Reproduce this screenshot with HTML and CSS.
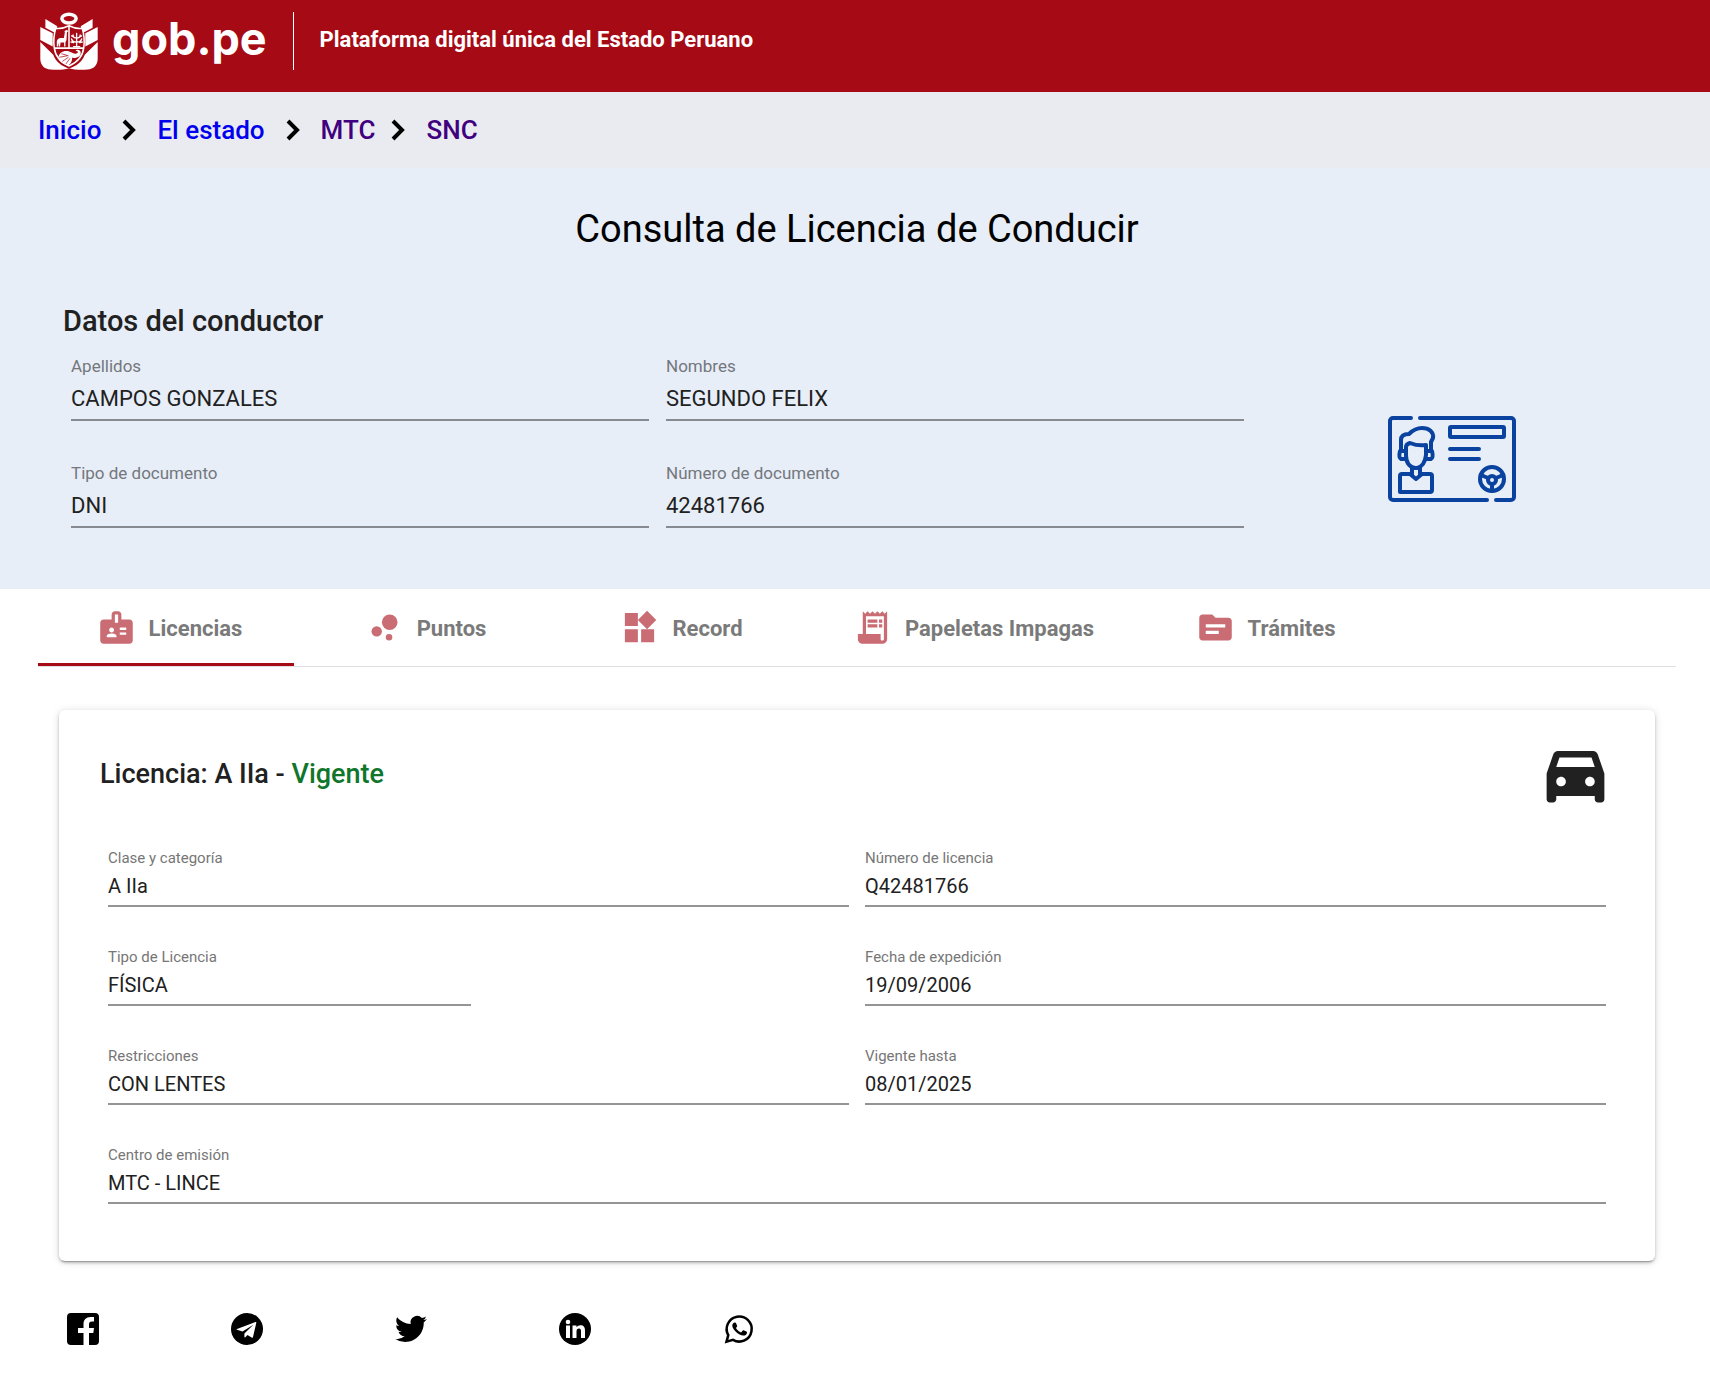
FILE: index.html
```html
<!DOCTYPE html>
<html lang="es">
<head>
<meta charset="utf-8">
<meta name="viewport" content="width=device-width, initial-scale=1">
<title>Consulta de Licencia de Conducir</title>
<link rel="stylesheet" href="styles.css">
</head>
<body>
<header class="topbar">
  <a class="brand" href="#" aria-label="gob.pe">
    <svg class="brand-shield" viewBox="0 0 57 57" aria-hidden="true">
      <ellipse cx="28.500" cy="6.500" rx="7" ry="4.300" fill="none" stroke="#fff" stroke-width="3.400"/>
      <path fill="#fff" d="M5.300 7 17 14l-2.500 6.500L5.300 15.500zM51.700 7 40 14l2.500 6.500 9.200-5z"/>
      <path fill="#fff" d="M.3 14.700 12.500 21v13L.3 27.500zM56.700 14.700 44.500 21v13L56.700 27.500z"/>
      <path fill="#fff" d="M.3 29.500 13 42c2.500 7 8 11 15.500 13.500C36 53 41.500 49 44 42l12.700-12.500V46c0 6-4 10.500-10 10.500-7 .5-13 .3-18.200-1.300-5.200 1.600-11.200 1.800-18.200 1.300-6 0-10-4.500-10-10.500z"/>
      <path fill="#a50a15" stroke="#fff" stroke-width="1.500" d="M15.500 16c5 .5 9-.5 13-2.500 4 2 8 3 13 2.500 1.500 5 2.500 12 1.500 19-1 9-6.500 14.500-14.500 18C20.500 49.500 15 44 14 35c-1-7 0-14 1.500-19z"/>
      <path fill="none" stroke="#fff" stroke-width="1.500" d="M14 35.500h29M28.500 13.500v22"/>
      <path fill="#fff" d="M16.500 34v-5c0-2 2-3.500 4-3.500h3l1-6-.8-.7 2.800-1.300 1.200 1.300-1.200 1-.5 8-1 2v4.200h-1.300V30h-3.500l-.5 4h-1.200v-4l-.8 4z"/>
      <path fill="none" stroke="#fff" stroke-width="1.300" stroke-linecap="round" d="M36 34V21M36 29.500c-3 0-4.500-1-5-3M36 29.500c3 0 4.500-1 5-3M36 25.500c-2.500 0-3.500-1.500-3.500-3M36 25.500c2.500 0 3.500-1.500 3.500-3M33 34h6M30.500 29.500l2.500.5M41.500 29.500 39 30M31 23.500l2 1M41 23.500l-2 1"/>
      <path fill="#fff" d="M18 45c.5-5 5-7.500 10-6.500 3.500.7 6 3.500 8.500 2 1.500-1 .5-2.500-1.500-2 1-2.500 5.500-1.500 5 2-.5 4-5 5-8.500 4.500.5 3.500-2 7-4.500 7.500-4-1-8.500-4-9-7.500z"/>
      <path fill="none" stroke="#a50a15" stroke-width=".7" d="M19 44.500l8-1.500M22 48.500l6-4M25.500 51l4-5.500M21 41l7 2"/>
    </svg>
    <span class="brand-name">gob.pe</span>
  </a>
  <p class="tagline">Plataforma digital única del Estado Peruano</p>
</header>

<nav class="crumbs" aria-label="Ruta">
  <a href="#">Inicio</a>
  <svg class="chevron" viewBox="0 0 14 22" aria-hidden="true"><path d="M2 2l9 9-9 9"/></svg>
  <a href="#">El estado</a>
  <svg class="chevron" viewBox="0 0 14 22" aria-hidden="true"><path d="M2 2l9 9-9 9"/></svg>
  <a class="seen" href="#">MTC</a>
  <svg class="chevron chevron-near" viewBox="0 0 14 22" aria-hidden="true"><path d="M2 2l9 9-9 9"/></svg>
  <a class="seen" href="#">SNC</a>
</nav>

<main>
  <section class="driver">
    <h1>Consulta de Licencia de Conducir</h1>
    <h2>Datos del conductor</h2>
    <div class="driver-row">
      <div class="driver-fields">
        <div class="field field-lg"><label for="apellidos">Apellidos</label><input id="apellidos" value="CAMPOS GONZALES" readonly></div>
        <div class="field field-lg"><label for="nombres">Nombres</label><input id="nombres" value="SEGUNDO FELIX" readonly></div>
        <div class="field field-lg"><label for="tipodoc">Tipo de documento</label><input id="tipodoc" value="DNI" readonly></div>
        <div class="field field-lg"><label for="numdoc">Número de documento</label><input id="numdoc" value="42481766" readonly></div>
      </div>
      <div class="driver-picture">
        <svg class="id-card" viewBox="0 0 128 86" aria-hidden="true">
          <g fill="none" stroke="#0a429f" stroke-width="4" stroke-linecap="round" stroke-linejoin="round">
            <path d="M23 2H5a3 3 0 0 0-3 3v76a3 3 0 0 0 3 3h94M32 2h91a3 3 0 0 1 3 3v76a3 3 0 0 1-3 3h-15"/>
            <rect x="62" y="11" width="54" height="10" rx="1"/>
            <path d="M62 33h29M62 43h29"/>
            <circle cx="104" cy="63" r="12"/>
            <circle cx="104" cy="64" r="4"/>
            <path d="M93 59l7 3M115 59l-7 3M104 69v6"/>
            <path d="M12 76V60a2 2 0 0 1 2-2h8l6 5 6-5h8a2 2 0 0 1 2 2v14a2 2 0 0 1-2 2z"/>
            <path d="M24 52v7M32 52v7"/>
            <path d="M18 31v8c0 8 4 12 9 13h2c5-1 8-5 9-13V29c-6 1-11 0-16-2-3 1-4 2-4 4z"/>
            <path d="M13 35V24c0-4 3-6 8-6 4-4 8-6 13-6 7 0 12 4 11 10l-2 4v9"/>
            <path d="M18 35h-6c-1 4-1 7 1 8h5M38 35h6c1 4 1 7-1 8h-5"/>
          </g>
        </svg>
      </div>
    </div>
  </section>

  <div class="tabs" role="tablist">
    <button class="tab tab-active" role="tab" aria-selected="true" type="button">
      <svg viewBox="0 0 24 24" aria-hidden="true"><path d="M20 7h-5V4c0-1.100-.9-2-2-2h-2c-1.100 0-2 .9-2 2v3H4c-1.100 0-2 .9-2 2v11c0 1.100.9 2 2 2h16c1.100 0 2-.9 2-2V9c0-1.100-.9-2-2-2zM9 12c.83 0 1.500.67 1.500 1.500S9.830 15 9 15s-1.500-.67-1.500-1.500S8.170 12 9 12zm3 6H6v-.75c0-1 2-1.500 3-1.500s3 .5 3 1.500V18zm1-9h-2V4h2v5zm5 7.500h-4V15h4v1.500zm0-3h-4V12h4v1.500z"/></svg>Licencias</button>
    <button class="tab" role="tab" aria-selected="false" type="button">
      <svg viewBox="0 0 24 24" aria-hidden="true"><circle cx="7.200" cy="14.400" r="3.200"/><circle cx="14.800" cy="18" r="2"/><circle cx="15.200" cy="8.800" r="4.800"/></svg>Puntos</button>
    <button class="tab" role="tab" aria-selected="false" type="button">
      <svg viewBox="0 0 24 24" aria-hidden="true"><path d="M13 13v8h8v-8h-8zM3 21h8v-8H3v8zM3 3v8h8V3H3zm13.660-1.310L11 7.340 16.660 13l5.660-5.660-5.660-5.650z"/></svg>Record</button>
    <button class="tab" role="tab" aria-selected="false" type="button">
      <svg viewBox="0 0 24 24" aria-hidden="true"><path d="M19.500 3.500 18 2l-1.500 1.500L15 2l-1.500 1.500L12 2l-1.500 1.500L9 2 7.500 3.500 6 2v14H3v3c0 1.660 1.340 3 3 3h12c1.660 0 3-1.340 3-3V2l-1.500 1.500zM19 19c0 .55-.45 1-1 1s-1-.45-1-1v-3H8V5h11v14z"/><path d="M9 7h6v2H9zM16 7h2v2h-2zM9 10h6v2H9zM16 10h2v2h-2z"/></svg>Papeletas Impagas</button>
    <button class="tab" role="tab" aria-selected="false" type="button">
      <svg viewBox="0 0 24 24" aria-hidden="true"><path d="M20 6h-8l-2-2H4c-1.100 0-1.990.9-1.990 2L2 18c0 1.100.9 2 2 2h16c1.100 0 2-.9 2-2V8c0-1.100-.9-2-2-2zm-6 10H6v-2h8v2zm4-4H6v-2h12v2z"/></svg>Trámites</button>
  </div>

  <article class="card">
    <div class="card-head">
      <h2>Licencia: A IIa - <span class="status">Vigente</span></h2>
      <svg class="car" viewBox="0 0 24 24" aria-hidden="true"><path d="M18.920 6.010C18.720 5.420 18.160 5 17.500 5h-11c-.66 0-1.210.42-1.420 1.010L3 12v8c0 .55.45 1 1 1h1c.55 0 1-.45 1-1v-1h12v1c0 .55.45 1 1 1h1c.55 0 1-.45 1-1v-8l-2.080-5.990zM7.500 16c-.83 0-1.500-.67-1.500-1.500S6.670 13 7.500 13s1.500.67 1.500 1.500S8.330 16 7.500 16zm9 0c-.83 0-1.500-.67-1.500-1.500s.67-1.500 1.500-1.500 1.500.67 1.500 1.500-.67 1.500-1.500 1.500zM6 10l1-3h10l1 3H6z"/></svg>
    </div>
    <div class="card-fields">
      <div class="field span-2"><label for="clase">Clase y categoría</label><input id="clase" value="A IIa" readonly></div>
      <div class="field span-2"><label for="numlic">Número de licencia</label><input id="numlic" value="Q42481766" readonly></div>
      <div class="field"><label for="tipolic">Tipo de Licencia</label><input id="tipolic" value="FÍSICA" readonly></div>
      <div class="field from-half"><label for="expedicion">Fecha de expedición</label><input id="expedicion" value="19/09/2006" readonly></div>
      <div class="field span-2"><label for="restricciones">Restricciones</label><input id="restricciones" value="CON LENTES" readonly></div>
      <div class="field span-2"><label for="vigente">Vigente hasta</label><input id="vigente" value="08/01/2025" readonly></div>
      <div class="field span-4"><label for="centro">Centro de emisión</label><input id="centro" value="MTC - LINCE" readonly></div>
    </div>
  </article>
</main>

<footer class="social">
  <a href="#" aria-label="Facebook"><svg viewBox="0 0 32 32"><path d="M4 0h24a4 4 0 0 1 4 4v24a4 4 0 0 1-4 4h-6V20h4.300l.7-5h-5v-3.500c0-2 .8-3 3-3h2V4h-3.500C19 4 16.500 7 16.500 11v4H11v5h5.500v12H4a4 4 0 0 1-4-4V4a4 4 0 0 1 4-4z"/></svg></a>
  <a href="#" aria-label="Telegram"><svg viewBox="0 0 32 32"><circle cx="16" cy="16" r="16"/><path fill="#fff" d="M6 16 24.500 9c.6-.2 1 .2.8.8L22 24c-.2.800-.8 1-1.400.5L16.500 22l-2.200 2.300c-.5.400-.9.200-.9-.5V20.500l9-8.700L11.500 18.500 6 16.800c-.5-.2-.5-.6 0-.8z"/></svg></a>
  <a href="#" aria-label="Twitter"><svg viewBox="0 0 24 24"><path d="M23.950 4.570a10 10 0 0 1-2.820.77 4.960 4.960 0 0 0 2.160-2.720c-.95.550-2 .96-3.130 1.180a4.920 4.920 0 0 0-8.380 4.480C7.690 8.090 4.070 6.130 1.640 3.160a4.820 4.820 0 0 0-.67 2.480c0 1.710.87 3.210 2.190 4.100a4.900 4.900 0 0 1-2.230-.62v.06a4.920 4.920 0 0 0 3.950 4.830 5 5 0 0 1-2.210.08 4.940 4.940 0 0 0 4.600 3.420A9.870 9.870 0 0 1 0 19.540a14 14 0 0 0 7.550 2.210c9.050 0 14-7.500 14-13.980 0-.21 0-.42-.02-.63a9.940 9.940 0 0 0 2.420-2.570z"/></svg></a>
  <a href="#" aria-label="LinkedIn"><svg viewBox="0 0 32 32"><circle cx="16" cy="16" r="16"/><g fill="#fff"><circle cx="9" cy="9" r="2.300"/><rect x="7" y="12.500" width="4" height="12.500"/><path d="M13.500 12.500h4v1.800c.8-1.300 2.200-2.100 4-2.100 3.200 0 4.500 2 4.500 5.300V25h-4v-6.700c0-1.700-.5-2.800-2-2.800-1.700 0-2.500 1.200-2.500 2.900V25h-4z"/></g></svg></a>
  <a href="#" aria-label="WhatsApp"><svg viewBox="0 0 32 32"><path fill="none" stroke="#000" stroke-width="2.500" d="M3.500 28.700l1.800-6.500a12.500 12.500 0 1 1 4.700 4.700z"/><path d="M12 9.500c.6 0 .9.300 1.200 1l.9 2.200c.2.600-.1 1.100-1.200 2.400 1.400 2.400 3.100 3.600 5.200 4.400l1.700-1.900c.4-.4.800-.4 1.300-.2l2.200 1.100c.6.300.8.500.7 1.200-.3 2-2.100 3-3.800 2.900-4.500-.4-10.100-5.100-10.900-9.500-.2-1.600.9-3.600 2.700-3.600z"/></svg></a>
</footer>
</body>
</html>
```
FILE: styles.css
```css
* {
  box-sizing: border-box;
}

body {
  margin: 0;
  background: #fff;
  color: #212121;
  font-family: Roboto, "Liberation Sans", sans-serif;
}

h1,
h2,
p {
  margin: 0;
}

a {
  text-decoration: none;
}

svg {
  display: block;
  flex: none;
}

/* Header */
.topbar {
  display: flex;
  align-items: flex-start;
  padding: 12px 40px 22px;
  background: #a50a15;
  color: #fff;
}

.brand {
  display: flex;
  gap: 14px;
  height: 58px;
  padding-right: 26px;
  border-right: 1px solid #fff;
  color: #fff;
}

.brand-shield {
  width: 58px;
  height: 58px;
}

.brand-name {
  font: 700 45px/54px Inter, sans-serif;
}

.tagline {
  padding-left: 26px;
  font-size: 22px;
  font-weight: 700;
  line-height: 56px;
}

/* Breadcrumb */
.crumbs {
  display: flex;
  align-items: center;
  padding: 20px 38px;
  background: #eaebf0;
  font-size: 26px;
  font-weight: 500;
  line-height: 36px;
}

.crumbs a {
  color: #00e;
}

.crumbs .seen {
  color: #40007f;
}

.chevron {
  width: 14px;
  height: 22px;
  margin: 0 21px 0 21px;
  fill: none;
  stroke: #000;
  stroke-width: 4;
}

.chevron-near {
  margin-left: 16px;
}

/* Driver data */
.driver {
  padding: 33px 59px 61px 63px;
  background: #e7eef8;
}

.driver h1 {
  color: #000;
  font-size: 38px;
  font-weight: 400;
  line-height: 56px;
  text-align: center;
}

.driver h2 {
  margin-top: 47px;
  font-size: 29px;
  font-weight: 500;
  line-height: 34px;
}

.driver-row {
  display: flex;
  gap: 8px;
  align-items: center;
  padding: 16px 0 0 8px;
}

.driver-fields {
  display: grid;
  flex: 3;
  grid-template-columns: 1fr 1fr;
  gap: 40px 17px;
}

.driver-picture {
  display: flex;
  flex: 1;
  justify-content: center;
  padding: 36px 4px 0 4px;
}

.id-card {
  width: 128px;
  height: 86px;
}

/* Form fields */
.field {
  display: flex;
  flex-direction: column;
  min-width: 0;
}

.field label {
  color: #767676;
  font-size: 15px;
  line-height: 20px;
}

.field input {
  width: 100%;
  height: 39px;
  padding: 0 0 1px;
  border: 0;
  border-bottom: 2px solid #949494;
  border-radius: 0;
  background: none;
  color: #212121;
  font: 20px/36px Roboto, "Liberation Sans", sans-serif;
  outline: none;
}

.field-lg label {
  color: #74777c;
  font-size: 17px;
  line-height: 24px;
}

.field-lg input {
  height: 43px;
  padding: 0;
  border-color: #878a90;
  font-size: 22px;
}

/* Tabs */
.tabs {
  display: flex;
  margin: 0 34px 0 38px;
  border-bottom: 1px solid #e0e0e0;
}

.tab {
  display: flex;
  align-items: center;
  justify-content: center;
  min-width: 256px;
  height: 77px;
  padding: 6px 40px 0;
  border: 0;
  border-bottom: 3px solid transparent;
  background: none;
  color: #7a7a7a;
  font: 700 22px/32px Roboto, "Liberation Sans", sans-serif;
  white-space: nowrap;
}

.tab svg {
  width: 39px;
  height: 39px;
  margin: 0 13px 3px 7px;
  fill: #c96c73;
}

.tab-active {
  border-color: #a50a15;
}

/* License card */
.card {
  margin: 43px 55px 0 59px;
  padding: 25px 41px 57px;
  border-radius: 6px;
  background: #fff;
  box-shadow: 0 3px 1px -2px rgba(0, 0, 0, .2), 0 2px 3px rgba(0, 0, 0, .2), 0 1px 8px rgba(0, 0, 0, .14);
}

.card-head {
  display: flex;
  align-items: center;
  justify-content: space-between;
}

.card-head h2 {
  font-size: 27px;
  font-weight: 500;
  line-height: 36px;
}

.status {
  color: #10762b;
}

.car {
  width: 77px;
  height: 77px;
  fill: #212121;
}

.card-fields {
  display: grid;
  grid-template-columns: repeat(4, 1fr);
  gap: 40px 16px;
  padding: 36px 8px 0;
}

.span-2 {
  grid-column: span 2;
}

.from-half {
  grid-column: 3 / span 2;
}

.span-4 {
  grid-column: span 4;
}

/* Social links */
.social {
  display: flex;
  gap: 132px;
  padding: 52px 67px 44px;
}

.social svg {
  width: 32px;
  height: 32px;
}
```
